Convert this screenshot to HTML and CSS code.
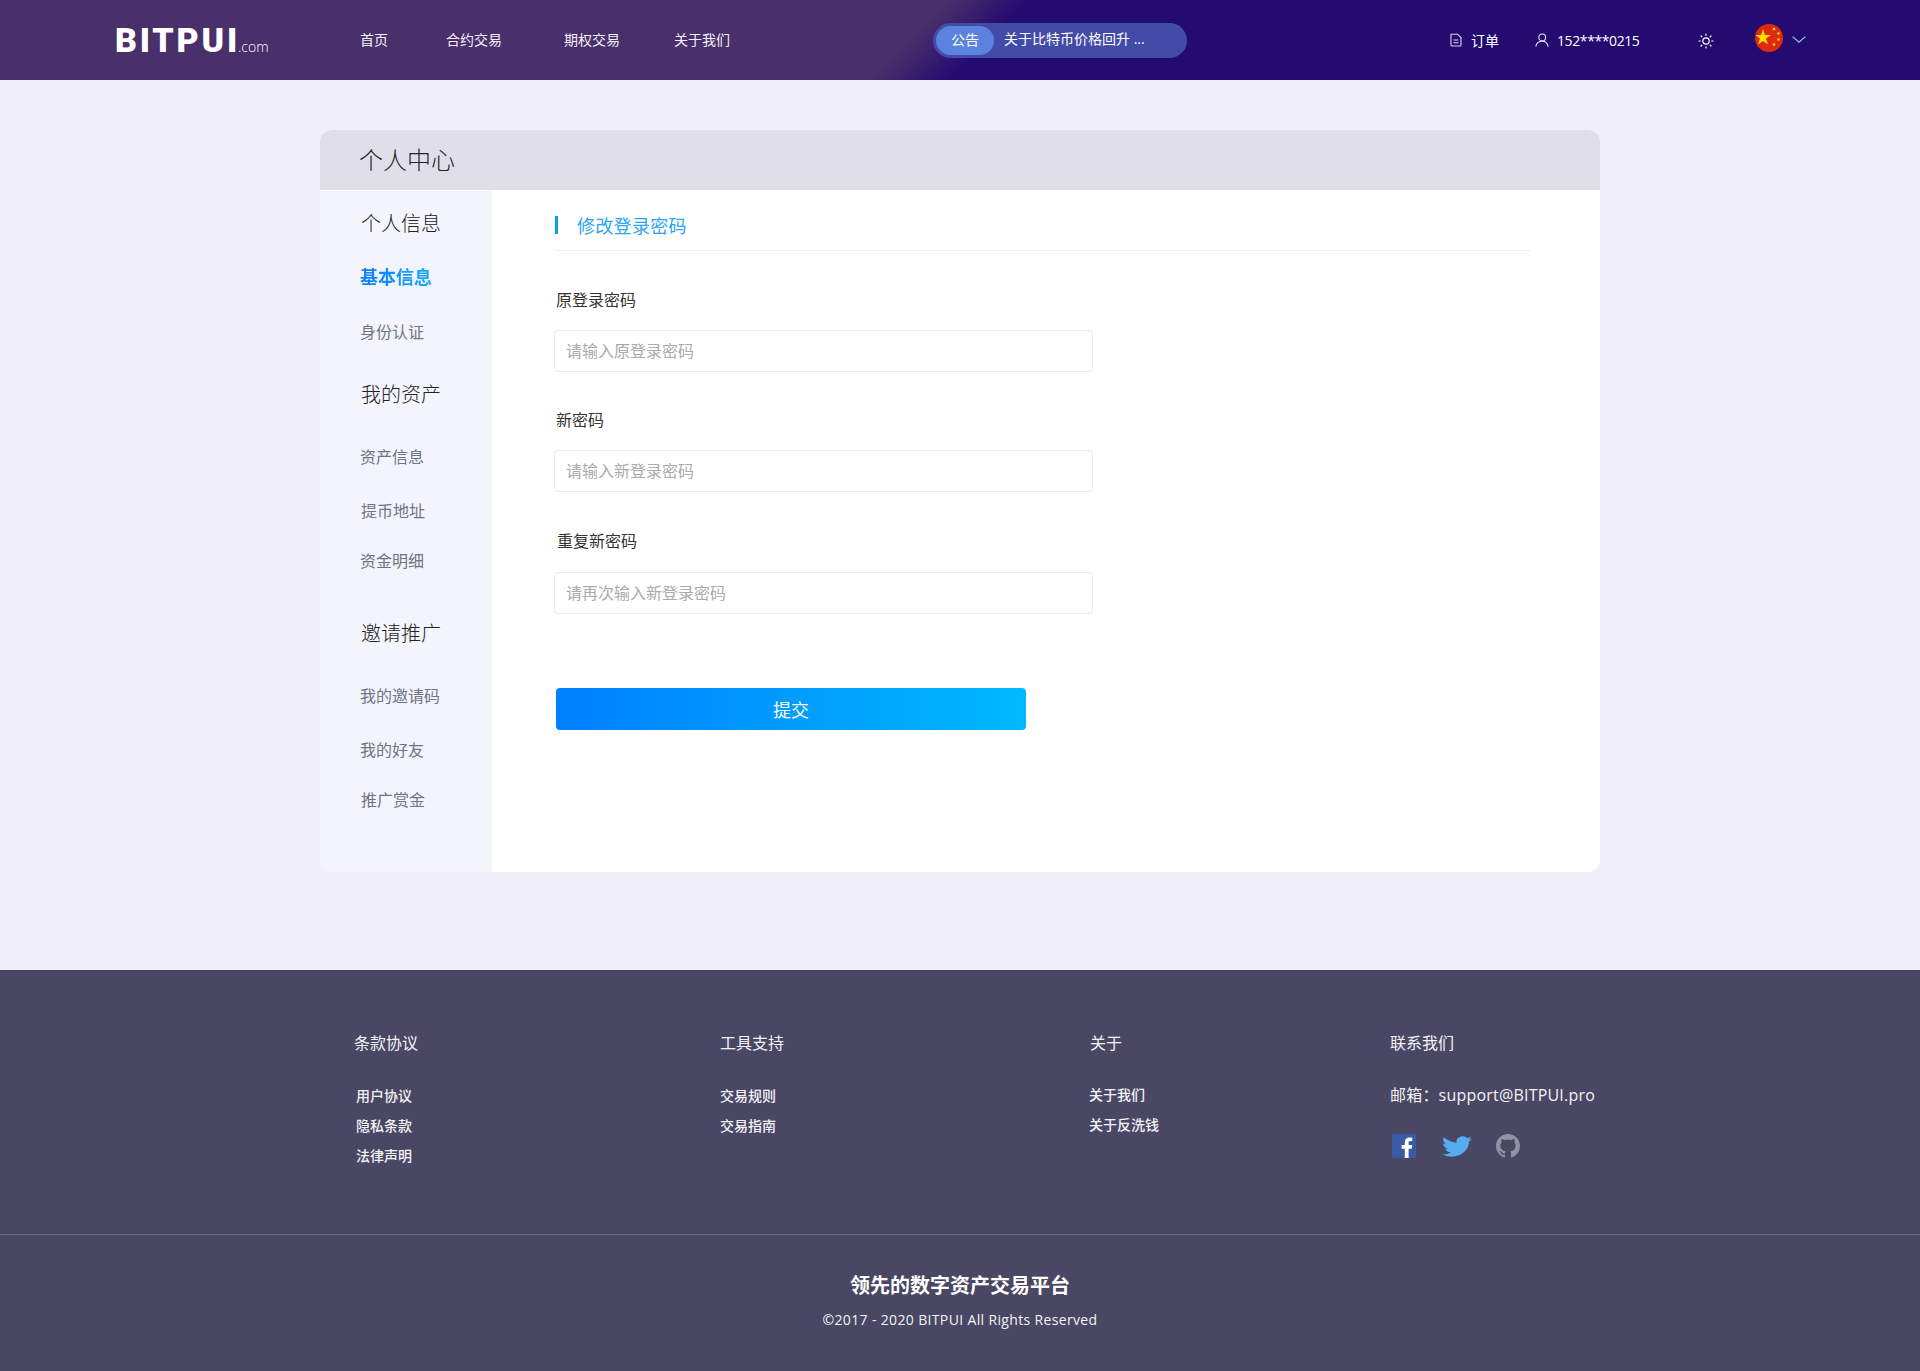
FILE: index.html
```html
<!DOCTYPE html>
<html>
<head>
  <meta charset="utf-8">
  <title>个人中心</title>
  <link rel="stylesheet" href="styles.css">
</head>
<body>

  <!-- Header -->
  <header class="topbar">
    <a class="logo"><span class="logo-name">BITPUI</span><span class="logo-com">.com</span></a>
    <nav class="topnav">
      <a class="nav-home">首页</a>
      <a class="nav-contract">合约交易</a>
      <a class="nav-option">期权交易</a>
      <a class="nav-about">关于我们</a>
    </nav>
    <div class="notice">
      <span class="notice-tag">公告</span>
      <span class="notice-text">关于比特币价格回升 ...</span>
    </div>
    <div class="topbar-right">
      <a class="top-link order-link">
        <svg class="icon" width="12" height="14" viewBox="0 0 12 14" fill="none" stroke="#d9d4ee" stroke-width="1.1">
          <path d="M1 1.2h6.6L11 4.6v7.4a1 1 0 0 1-1 1H2a1 1 0 0 1-1-1z"/>
          <path d="M3.6 7h4.8M3.6 9.8h4.8"/>
        </svg>
        订单
      </a>
      <a class="top-link user-link">
        <svg class="icon" width="14" height="14" viewBox="0 0 14 14" fill="none" stroke="#e6e2f4" stroke-width="1.1">
          <circle cx="7.2" cy="4.400" r="3.4"/>
          <path d="M.8 13.6c.5-3.2 3-5.4 6.4-5.4 3.1 0 5.4 2.2 6 5.4"/>
        </svg>
        <span class="phone">152****0215</span>
      </a>
      <svg class="sun" width="16" height="16" viewBox="0 0 16 16" fill="none" stroke="#fff" stroke-width="1.2" stroke-linecap="round">
        <circle cx="8" cy="8" r="3.2"/>
        <path d="M8 1v1.2M8 13.8V15M1 8h1.2M13.8 8H15M3 3l.9.9M12.1 12.1l.9.9M3 13l.9-.9M12.1 3.9L13 3"/>
      </svg>
      <svg class="flag" width="28" height="28" viewBox="0 0 28 28">
        <circle cx="14" cy="14" r="14" fill="#de2910"/>
        <polygon fill="#ffde00" points="8,5 10,11 16,11 11,14.6 13,20.5 8,17 3,20.5 5,14.6 0.5,11 6,11"/>
        <circle cx="19" cy="5" r="1.3" fill="#ffde00"/>
        <circle cx="23.5" cy="9.5" r="1.3" fill="#ffde00"/>
        <circle cx="23.5" cy="15.5" r="1.3" fill="#ffde00"/>
        <circle cx="19" cy="20.5" r="1.3" fill="#ffde00"/>
      </svg>
      <svg class="chevron" width="14" height="7" viewBox="0 0 14 7" fill="none" stroke="#8fc8f2" stroke-width="1.2">
        <path d="M.6.6L7 6.2 13.4.6"/>
      </svg>
    </div>
  </header>

  <!-- Personal centre card -->
  <main class="page">
    <section class="card">
      <h1 class="card-title">个人中心</h1>
      <div class="card-body">

        <aside class="sidebar">
          <h3 class="side-head">个人信息</h3>
          <a class="side-link side-active">基本信息</a>
          <a class="side-link">身份认证</a>

          <h3 class="side-head head-assets">我的资产</h3>
          <a class="side-link link-first">资产信息</a>
          <a class="side-link link-shift">提币地址</a>
          <a class="side-link link-tight">资金明细</a>

          <h3 class="side-head head-invite">邀请推广</h3>
          <a class="side-link link-first">我的邀请码</a>
          <a class="side-link">我的好友</a>
          <a class="side-link link-tight link-shift">推广赏金</a>
        </aside>

        <div class="content">
          <h2 class="section-title"><span class="section-mark"></span>修改登录密码</h2>

          <form class="pwd-form">
            <label class="field-label">原登录密码</label>
            <input class="field-input" type="password" placeholder="请输入原登录密码">

            <label class="field-label">新密码</label>
            <input class="field-input" type="password" placeholder="请输入新登录密码">

            <label class="field-label label-last">重复新密码</label>
            <input class="field-input" type="password" placeholder="请再次输入新登录密码">

            <button class="submit-btn" type="button">提交</button>
          </form>
        </div>

      </div>
    </section>
  </main>

  <!-- Footer -->
  <footer class="footer">
    <div class="footer-cols">
      <div class="footer-col">
        <h4 class="col-title">条款协议</h4>
        <a class="col-link shift-2">用户协议</a>
        <a class="col-link shift-2">隐私条款</a>
        <a class="col-link shift-2">法律声明</a>
      </div>
      <div class="footer-col">
        <h4 class="col-title">工具支持</h4>
        <a class="col-link">交易规则</a>
        <a class="col-link">交易指南</a>
      </div>
      <div class="footer-col col-about">
        <h4 class="col-title">关于</h4>
        <a class="col-link">关于我们</a>
        <a class="col-link">关于反洗钱</a>
      </div>
      <div class="footer-col col-contact">
        <h4 class="col-title">联系我们</h4>
        <p class="mail">邮箱：support@BITPUI.pro</p>
        <div class="socials">
          <svg width="24" height="24" viewBox="0 0 24 24">
            <rect width="24" height="24" rx="2" fill="#3b5aa6"/>
            <path fill="#fff" d="M16.6 24v-9.3h3.1l.5-3.6h-3.6V8.8c0-1 .3-1.8 1.800-1.800h1.900V3.800c-.3 0-1.500-.2-2.800-.2-2.800 0-4.700 1.700-4.700 4.800v2.700H9.600v3.600h3.200V24z"/>
          </svg>
          <svg class="tw" width="30" height="25" viewBox="0 0 24 24" preserveAspectRatio="none">
            <path fill="#55acee" d="M23.953 4.57a10 10 0 01-2.825.775 4.958 4.958 0 002.163-2.723c-.951.555-2.005.959-3.127 1.184a4.92 4.92 0 00-8.384 4.482C7.69 8.095 4.067 6.13 1.64 3.162a4.822 4.822 0 00-.666 2.475c0 1.71.87 3.213 2.188 4.096a4.904 4.904 0 01-2.228-.616v.06a4.923 4.923 0 003.946 4.827 4.996 4.996 0 01-2.212.085 4.936 4.936 0 004.604 3.417 9.867 9.867 0 01-6.102 2.105c-.39 0-.779-.023-1.17-.067a13.995 13.995 0 007.557 2.209c9.053 0 13.998-7.496 13.998-13.985 0-.21 0-.42-.015-.63A9.935 9.935 0 0024 4.59z"/>
          </svg>
          <svg class="gh" width="24" height="24" viewBox="0 0 16 16">
            <path fill="#8f93a6" d="M8 0C3.58 0 0 3.58 0 8c0 3.54 2.29 6.53 5.47 7.59.4.07.55-.17.55-.38 0-.19-.01-.82-.01-1.49-2.01.37-2.53-.49-2.69-.94-.09-.23-.48-.94-.82-1.13-.28-.15-.68-.52-.01-.53.63-.01 1.08.58 1.23.82.72 1.21 1.87.87 2.33.66.07-.52.28-.87.51-1.07-1.78-.2-3.64-.89-3.64-3.95 0-.87.31-1.59.82-2.15-.08-.2-.36-1.02.08-2.12 0 0 .67-.21 2.2.82.64-.18 1.32-.27 2-.27.68 0 1.36.09 2 .27 1.53-1.04 2.2-.82 2.2-.82.44 1.1.16 1.92.08 2.12.51.56.82 1.27.82 2.15 0 3.07-1.87 3.75-3.65 3.95.29.25.54.73.54 1.48 0 1.07-.01 1.93-.01 2.2 0 .21.15.46.55.38A8.013 8.013 0 0016 8c0-4.42-3.58-8-8-8z"/>
          </svg>
        </div>
      </div>
    </div>
    <div class="footer-bottom">
      <p class="slogan">领先的数字资产交易平台</p>
      <p class="copyright">©2017 - 2020 BITPUI All Rights Reserved</p>
    </div>
  </footer>

</body>
</html>
```

FILE: styles.css
```css
* {
  box-sizing: border-box;
}

body {
  margin: 0;
  background-color: #f0eff9;
  font-family: "Open Sans", "Noto Sans CJK SC", sans-serif;
  font-size: 14px;
  color: #333;
}

h1, h2, h3, h4, p {
  margin: 0;
  font-weight: normal;
}

/* Header */
.topbar {
  display: flex;
  align-items: center;
  height: 80px;
  padding-left: 115px;
  color: #fff;
  background: linear-gradient(135deg, #49306a 0%, #49306a 47.5%, #240b70 51.5%, #240b70 100%);
}

.logo {
  display: flex;
  align-items: baseline;
  width: 245px;
  margin-top: -1px;
}

.logo-name {
  font-family: Roboto, sans-serif;
  font-size: 34px;
  font-weight: 900;
  letter-spacing: 2.8px;
  line-height: 40px;
}

.logo-com {
  margin-left: -2px;
  font-family: "Open Sans", sans-serif;
  font-size: 14px;
  font-weight: 300;
}

.topnav {
  display: flex;
  width: 573px;
  line-height: 20px;
}

.topnav a {
  display: block;
  color: #f2eff8;
}

.nav-home { margin-right: 58px; }
.nav-contract { margin-right: 62px; }
.nav-option { margin-right: 54px; }

.notice {
  display: flex;
  align-items: center;
  width: 254px;
  height: 35px;
  padding-left: 3px;
  background-color: #434ba8;
  border-radius: 18px;
}

.notice-tag {
  width: 58px;
  height: 29px;
  line-height: 28px;
  text-align: center;
  background-color: #5c82e0;
  border-radius: 15px;
}

.notice-text {
  margin: -2px 0 0 10px;
  line-height: 20px;
}

.topbar-right {
  display: flex;
  align-items: center;
  margin-left: 263px;
}

.top-link {
  display: flex;
  align-items: center;
}

.top-link .icon {
  margin-right: 9px;
}

.order-link { width: 85px; }

.user-link .icon {
  margin-right: 8px;
}

.phone {
  letter-spacing: -0.4px;
}

.sun {
  margin-left: 59px;
  margin-top: 2px;
}

.flag {
  margin-left: 41px;
  margin-top: -4px;
}

.chevron {
  margin-left: 9px;
  margin-top: -2px;
}

/* Card */
.page {
  padding: 50px 0 98px;
}

.card {
  width: 1280px;
  height: 742px;
  margin: 0 auto;
  display: flex;
  flex-direction: column;
  background-color: #fff;
  border-radius: 12px;
  overflow: hidden;
}

.card-title {
  height: 60px;
  padding-left: 39px;
  font-size: 24px;
  font-weight: 300;
  line-height: 59px;
  color: #222;
  background-color: #e0dfe9;
}

.card-body {
  flex: 1;
  display: flex;
}

.sidebar {
  width: 172px;
  margin-top: 1px;
  padding: 18px 0 0 40px;
  background-color: #f4f4fc;
}

.side-head {
  margin-left: 1px;
  font-size: 20px;
  font-weight: 300;
  line-height: 30px;
  color: #222;
}

.head-assets { margin-top: 33px; }
.head-invite { margin-top: 43px; }

.side-link {
  display: block;
  margin-top: 24px;
  font-size: 16px;
  line-height: 30px;
  color: #6e7587;
}

.link-first { margin-top: 32px; }
.link-tight { margin-top: 20px; }
.link-shift { margin-left: 1px; }

.side-active {
  width: 72px;
  margin-top: 23px;
  padding-bottom: 1px;
  font-size: 18px;
  font-weight: 700;
  color: transparent;
  background: linear-gradient(90deg, #0a7cff, #14aaff);
  -webkit-background-clip: text;
  background-clip: text;
}

.content {
  flex: 1;
  padding: 23px 70px 0 62px;
}

.section-title {
  display: flex;
  align-items: center;
  height: 24px;
  padding-bottom: 13px;
  font-size: 18px;
  letter-spacing: 0.3px;
  color: #2aa4f4;
  border-bottom: 1px solid #f0f0f4;
  box-sizing: content-box;
}

.section-mark {
  width: 3px;
  height: 18px;
  margin: 0 19px 0 1px;
  background-color: #0a9cf5;
}

.pwd-form {
  width: 539px;
}

.field-label {
  display: block;
  margin: 35px 0 17px 2px;
  font-size: 16px;
  line-height: 26px;
  color: #333;
}

.label-last {
  margin: 36px 0 18px 3px;
}

.pwd-form .field-label:first-child {
  margin-top: 36px;
}

.field-input {
  display: block;
  width: 100%;
  height: 42px;
  padding: 0 11px 2px;
  font-family: "Noto Sans CJK SC", sans-serif;
  font-size: 16px;
  border: 1px solid #ebebf0;
  border-radius: 4px;
  outline: none;
}

.field-input::placeholder {
  color: #aaa;
}

.submit-btn {
  display: block;
  width: 470px;
  height: 42px;
  margin: 74px 0 0 2px;
  font-family: "Noto Sans CJK SC", sans-serif;
  font-size: 18px;
  color: #fff;
  background: linear-gradient(90deg, #007fff, #00b9ff);
  border: none;
  border-radius: 4px;
}

/* Footer */
.footer {
  height: 401px;
  background-color: #4a4764;
  color: #f2f2f6;
}

.footer-cols {
  display: grid;
  grid-template-columns: 366px 369px 301px auto;
  width: 1280px;
  height: 264px;
  margin: 0 auto;
  padding: 61px 0 0 34px;
}

.col-title {
  margin-bottom: 31px;
  font-size: 16px;
  line-height: 24px;
}

.col-link {
  display: block;
  margin-bottom: 10px;
  font-size: 14px;
  font-weight: 500;
  line-height: 20px;
}

.shift-2 { margin-left: 2px; }

.col-about .col-title {
  margin-left: 1px;
  margin-bottom: 30px;
}

.col-contact .col-title {
  margin-bottom: 30px;
}

.mail {
  margin-top: -2px;
  font-size: 16px;
  line-height: 24px;
  letter-spacing: 0.2px;
}

.socials {
  display: flex;
  align-items: flex-start;
  margin: 27px 0 0 2px;
}

.tw { margin-left: 26px; }
.gh { margin-left: 24px; }

.footer-bottom {
  height: 137px;
  padding-top: 36px;
  text-align: center;
  border-top: 1px solid #6a6882;
}

.slogan {
  font-size: 20px;
  font-weight: 700;
  line-height: 30px;
  color: #fff;
}

.copyright {
  margin-top: 4px;
  font-size: 14px;
  line-height: 30px;
  letter-spacing: 0.35px;
}
```
